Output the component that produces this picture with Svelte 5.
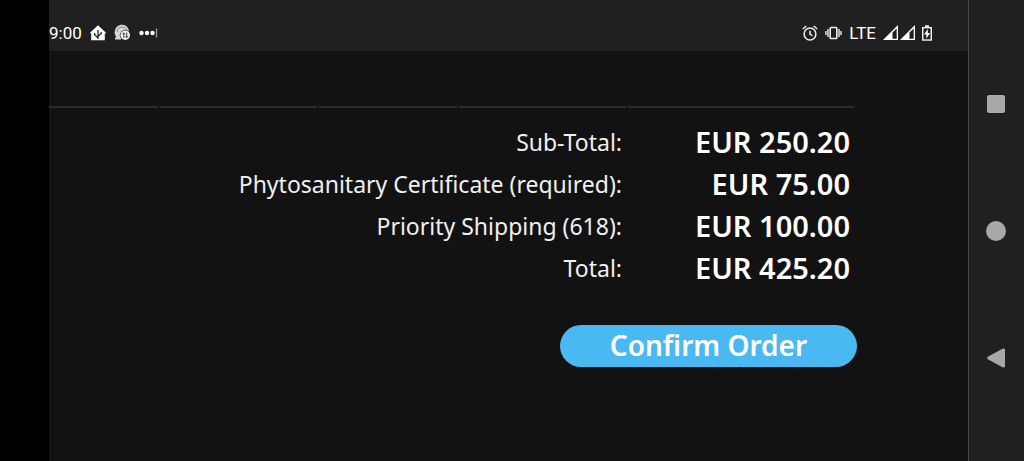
<script>
  const lines = [
    { label: 'Sub-Total:', amount: 'EUR 250.20' },
    { label: 'Phytosanitary Certificate (required):', amount: 'EUR 75.00' },
    { label: 'Priority Shipping (618):', amount: 'EUR 100.00' },
    { label: 'Total:', amount: 'EUR 425.20' }
  ];
</script>

<div class="screen">
  <div class="cutout"></div>
  <div class="app">
    <header>
      <div class="group left">
        <span class="clock">9:00</span>
        <svg width="16" height="16" viewBox="0 0 16 16" aria-hidden="true">
          <path d="M8 0.3L15.7 7.5V8.6H14.8V15.2H1.2V8.6H0.3V7.5Z" fill="#fff" />
          <path d="M8 5V14M8 12.8L4.6 9.6V8M8 11.2L11.2 8.4V7" fill="none" stroke="#202020" stroke-width="1.3" />
        </svg>
        <svg width="17" height="17" viewBox="0 0 17 17" aria-hidden="true">
          <path d="M1 15.5V14L2.2 13C0.8 11 0.4 9 0.8 7C1.6 3 4.6 0.8 8 0.8C11.6 0.8 14.6 3.4 15 7L9 8L7 15.5Z" fill="#d6d6d6" />
          <path d="M3 8C3.4 4.8 5.4 3 8 3C10.4 3 12 4.2 12.8 6" fill="none" stroke="#888" stroke-width="1" />
          <circle cx="11.2" cy="11.2" r="5.4" fill="#202020" />
          <circle cx="11.2" cy="11.2" r="4.8" fill="#f0f0f0" />
          <path d="M9.8 14V9M8.5 10.3L9.8 8.8L11 10.3M12.7 8.5V13.4M11.5 12.2L12.7 13.7L14 12.2" fill="none" stroke="#303030" stroke-width="0.9" />
        </svg>
        <svg width="19" height="12" viewBox="0 0 19 12" aria-hidden="true">
          <circle cx="2.5" cy="6" r="2.2" fill="#fff" /><circle cx="8" cy="6" r="2.2" fill="#fff" /><circle cx="13.5" cy="6" r="2.2" fill="#fff" />
          <path d="M17.5 1.5V10.5" stroke="#999" stroke-width="1.4" />
        </svg>
      </div>
      <div class="group">
        <svg width="16" height="16" viewBox="0 0 16 16" fill="none" stroke="#eee" aria-hidden="true">
          <circle cx="8" cy="9" r="5.9" stroke-width="1.5" />
          <path d="M8 5.7V9.2L10.4 10.7M0.8 4L4.3 1M15.2 4L11.7 1" stroke-width="1.5" />
        </svg>
        <svg width="17" height="14" viewBox="0 0 17 14" fill="none" stroke="#eee" aria-hidden="true">
          <rect x="5.2" y="1.5" width="6.6" height="11" rx="0.8" stroke-width="1.6" />
          <path d="M3 3V11M14 3V11M1 5V9M16 5V9" stroke-width="1.4" />
        </svg>
        <span class="network">LTE</span>
        <div class="bars">
          {#each [0, 1] as sim (sim)}
            <svg width="15" height="15" viewBox="0 0 15 15" aria-hidden="true">
              <path d="M0 15L15 0V15Z" fill="#fff" />
              <path d="M9.5 7.6L13.7 3.4V13.7H9.5Z" fill="#202020" />
            </svg>
          {/each}
        </div>
        <svg width="10" height="16" viewBox="0 0 10 16" aria-hidden="true">
          <path d="M3 2V0.3H7V2H10V15.7H0V2Z" fill="#eee" />
          <path d="M1.5 3.4H8.5V14.3H1.5Z" fill="#202020" />
          <path d="M5.8 4L2 9.4H4.3V13.7L8 7.9H5.8Z" fill="#fff" />
        </svg>
      </div>
    </header>

    <main>
      <div class="rules">
        <i></i><i></i><i></i><i></i><i></i>
      </div>
      <table>
        <tbody>
          {#each lines as line (line.label)}
            <tr>
              <th scope="row">{line.label}</th>
              <td>{line.amount}</td>
            </tr>
          {/each}
        </tbody>
      </table>
      <button class="confirm" type="button">Confirm Order</button>
    </main>
  </div>

  <nav aria-label="System navigation">
    <button type="button" aria-label="Recent apps">
      <svg width="20" height="20" viewBox="0 0 20 20"><rect x="1" y="1" width="18" height="18" rx="2" /></svg>
    </button>
    <button type="button" aria-label="Home">
      <svg width="20" height="20" viewBox="0 0 20 20"><circle cx="10" cy="10" r="10" /></svg>
    </button>
    <button type="button" aria-label="Back">
      <svg width="20" height="20" viewBox="0 0 20 20"><path d="M1.8 8.8L16.5 0.7Q19 0 19 2V18Q19 20 16.5 19.3L1.8 11.2Q0.2 10 1.8 8.8Z" /></svg>
    </button>
  </nav>
</div>

<style>
  :global(body) {
    margin: 0;
    background: #121212;
  }
  .screen {
    display: flex;
    min-height: 100vh;
    background: #121212;
    color: #fff;
    font-family: 'Noto Sans', sans-serif;
  }
  .cutout {
    flex: 0 0 49px;
    background: #000;
  }
  .app {
    flex: 1;
    min-width: 0;
  }
  header {
    display: flex;
    justify-content: space-between;
    align-items: center;
    box-sizing: border-box;
    height: 51px;
    padding: 14px 36px 0 0;
    background: #202020;
    font-family: Roboto, sans-serif;
    font-size: 17px;
    line-height: 20px;
  }
  .group {
    display: flex;
    align-items: center;
    gap: 7px;
  }
  .left {
    gap: 8px;
  }
  .clock,
  .network {
    font-weight: 400;
  }
  .bars {
    display: flex;
    gap: 2px;
  }
  svg {
    display: block;
  }
  main {
    display: flex;
    flex-direction: column;
    padding: 55px 111px 0 0;
  }
  .rules {
    display: grid;
    grid-template-columns: 109fr 157fr 137fr 167fr 226fr;
    gap: 2px;
    margin-right: 3px;
  }
  .rules i {
    height: 2px;
    background: #2b2b2b;
  }
  table {
    width: 100%;
    margin-top: 13px;
    border-collapse: collapse;
  }
  tr {
    height: 42px;
  }
  th,
  td {
    padding: 0;
    text-align: right;
    white-space: nowrap;
    line-height: 42px;
  }
  th {
    font-size: 23px;
    font-weight: 400;
    color: #f0f0f0;
  }
  td {
    width: 235px;
    padding-right: 7px;
    font-size: 29px;
    font-weight: 600;
    box-sizing: border-box;
  }
  .confirm {
    align-self: flex-end;
    width: 297px;
    height: 42px;
    margin-top: 36px;
    padding: 0 0 2px;
    border: 0;
    border-radius: 21px;
    background: #4ab9f1;
    color: #fff;
    font: 600 28px/40px 'Noto Sans', sans-serif;
  }
  nav {
    flex: 0 0 56px;
    display: flex;
    flex-direction: column;
    justify-content: center;
    align-items: center;
    gap: 107px;
    box-sizing: border-box;
    padding-right: 2px;
    border-left: 1px solid #4a4a4a;
    background: #202020;
  }
  nav button {
    padding: 0;
    border: 0;
    background: none;
  }
  nav svg {
    fill: #a8a8a8;
  }
</style>
